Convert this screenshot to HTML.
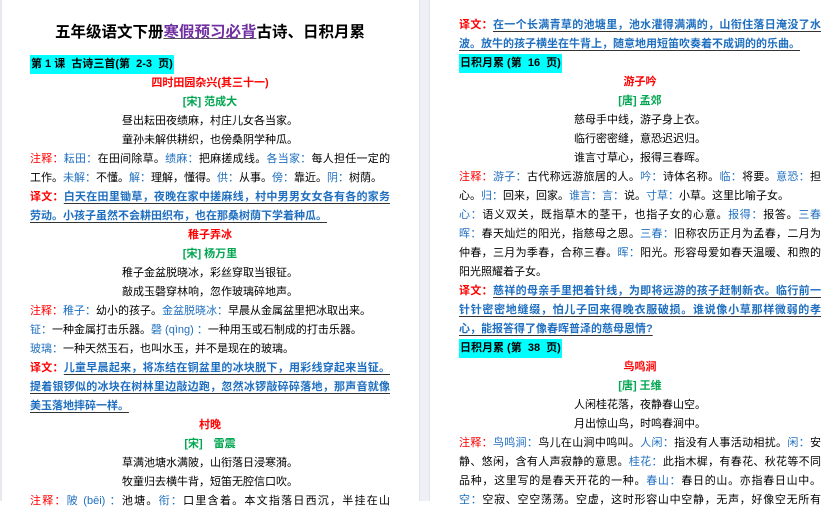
<!DOCTYPE html>
<html><head><meta charset="utf-8"><style>
body{margin:0;width:838px;height:501px;overflow:hidden;background:#fff;font-family:"Liberation Sans","Noto Sans CJK SC",sans-serif;font-size:11px;color:#000;position:relative}
.gap{position:absolute;left:419px;top:0;width:11px;height:501px;background:#eef0f5;border-left:1px solid #e2e4ea;border-right:1px solid #e2e4ea;box-sizing:border-box}
.edge{position:absolute;left:0;top:0;width:2px;height:501px;background:#e8e8ee}
.col{position:absolute}
.l{height:19px;line-height:19px;white-space:nowrap;overflow:hidden}
.j{text-align:justify;text-align-last:justify}
.c{text-align:center}
.r{color:#ff0000}
.b{color:#1f6fc0}
.g{color:#00a650}
.u{color:#1f6fc0;text-decoration:underline;text-decoration-color:#333;text-underline-offset:3px}
.h{background:#00ffff;display:inline-block;font-weight:bold;padding:0 1px;height:19px;white-space:pre}
.bd{font-weight:bold}
</style></head><body>
<div class="edge"></div>
<div class="gap"></div>
<div style="position:absolute;left:0;top:20px;width:420px;text-align:center;font-size:15.5px;font-weight:bold;line-height:26px">五年级语文下册<span style="color:#7030a0;text-decoration:underline;text-decoration-color:#555">寒假预习必背</span>古诗、日积月累</div>
<div class="col" style="left:30px;top:55px;width:360px">
<div class="l"><span class="h">第 1 课  古诗三首(第  2-3  页)</span></div>
<div class="l c r bd">四时田园杂兴(其三十一)</div>
<div class="l c g bd">[宋] 范成大</div>
<div class="l c">昼出耘田夜绩麻，村庄儿女各当家。</div>
<div class="l c">童孙未解供耕织，也傍桑阴学种瓜。</div>
<div class="l j"><span class="r">注释：</span><span class="b">耘田：</span>在田间除草。<span class="b">绩麻：</span>把麻搓成线。<span class="b">各当家：</span>每人担任一定的</div>
<div class="l">工作。<span class="b">未解：</span>不懂。<span class="b">解：</span>理解，懂得。<span class="b">供：</span>从事。<span class="b">傍：</span>靠近。<span class="b">阴：</span>树荫。</div>
<div class="l j bd"><span class="r">译文：</span><span class="u">白天在田里锄草，夜晚在家中搓麻线，村中男男女女各有各的家务</span></div>
<div class="l bd"><span class="u">劳动。小孩子虽然不会耕田织布，也在那桑树荫下学着种瓜。</span></div>
<div class="l c r bd">稚子弄冰</div>
<div class="l c g bd">[宋] 杨万里</div>
<div class="l c">稚子金盆脱晓冰，彩丝穿取当银钲。</div>
<div class="l c">敲成玉磬穿林响，忽作玻璃碎地声。</div>
<div class="l"><span class="r">注释：</span><span class="b">稚子：</span>幼小的孩子。<span class="b">金盆脱晓冰：</span>早晨从金属盆里把冰取出来。</div>
<div class="l"><span class="b">钲：</span>一种金属打击乐器。<span class="b">磬 (qìng) ：</span>一种用玉或石制成的打击乐器。</div>
<div class="l"><span class="b">玻璃：</span>一种天然玉石，也叫水玉，并不是现在的玻璃。</div>
<div class="l j bd"><span class="r">译文：</span><span class="u">儿童早晨起来，将冻结在铜盆里的冰块脱下，用彩线穿起来当钲。</span></div>
<div class="l j bd"><span class="u">提着银锣似的冰块在树林里边敲边跑，忽然冰锣敲碎碎落地，那声音就像</span></div>
<div class="l bd"><span class="u">美玉落地摔碎一样。</span></div>
<div class="l c r bd">村晚</div>
<div class="l c g bd">[宋]　雷震</div>
<div class="l c">草满池塘水满陂，山衔落日浸寒漪。</div>
<div class="l c">牧童归去横牛背，短笛无腔信口吹。</div>
<div class="l j"><span class="r">注释：</span><span class="b">陂 (bēi) ：</span>池塘。<span class="b">衔：</span>口里含着。本文指落日西沉，半挂在山</div>
</div>
<div class="col" style="left:459px;top:16px;width:362px">
<div class="l j bd"><span class="r">译文：</span><span class="u">在一个长满青草的池塘里，池水灌得满满的，山衔住落日淹没了水</span></div>
<div class="l bd"><span class="u">波。放牛的孩子横坐在牛背上，随意地用短笛吹奏着不成调的的乐曲。</span></div>
<div class="l"><span class="h">日积月累 (第  16  页)</span></div>
<div class="l c r bd">游子吟</div>
<div class="l c g bd">[唐] 孟郊</div>
<div class="l c">慈母手中线，游子身上衣。</div>
<div class="l c">临行密密缝，意恐迟迟归。</div>
<div class="l c">谁言寸草心，报得三春晖。</div>
<div class="l j"><span class="r">注释：</span><span class="b">游子：</span>古代称远游旅居的人。<span class="b">吟：</span>诗体名称。<span class="b">临：</span>将要。<span class="b">意恐：</span>担</div>
<div class="l">心。<span class="b">归：</span>回来，回家。<span class="b">谁言：言：</span>说。<span class="b">寸草：</span>小草。这里比喻子女。</div>
<div class="l j"><span class="b">心：</span>语义双关，既指草木的茎干，也指子女的心意。<span class="b">报得：</span>报答。<span class="b">三春</span></div>
<div class="l j"><span class="b">晖：</span>春天灿烂的阳光，指慈母之恩。<span class="b">三春：</span>旧称农历正月为孟春，二月为</div>
<div class="l j">仲春，三月为季春，合称三春。<span class="b">晖：</span>阳光。形容母爱如春天温暖、和煦的</div>
<div class="l">阳光照耀着子女。</div>
<div class="l j bd"><span class="r">译文：</span><span class="u">慈祥的母亲手里把着针线，为即将远游的孩子赶制新衣。临行前一</span></div>
<div class="l j bd"><span class="u">针针密密地缝缀，怕儿子回来得晚衣服破损。谁说像小草那样微弱的孝</span></div>
<div class="l bd"><span class="u">心，能报答得了像春晖普泽的慈母恩情?</span></div>
<div class="l"><span class="h">日积月累 (第  38  页)</span></div>
<div class="l c r bd">鸟鸣涧</div>
<div class="l c g bd">[唐] 王维</div>
<div class="l c">人闲桂花落，夜静春山空。</div>
<div class="l c">月出惊山鸟，时鸣春涧中。</div>
<div class="l j"><span class="r">注释：</span><span class="b">鸟鸣涧：</span>鸟儿在山涧中鸣叫。<span class="b">人闲：</span>指没有人事活动相扰。<span class="b">闲：</span>安</div>
<div class="l j">静、悠闲，含有人声寂静的意思。<span class="b">桂花：</span>此指木樨，有春花、秋花等不同</div>
<div class="l j">品种，这里写的是春天开花的一种。<span class="b">春山：</span>春日的山。亦指春日山中。</div>
<div class="l j"><span class="b">空：</span>空寂、空空荡荡。空虚，这时形容山中空静，无声，好像空无所有</div>
</div>
</body></html>
